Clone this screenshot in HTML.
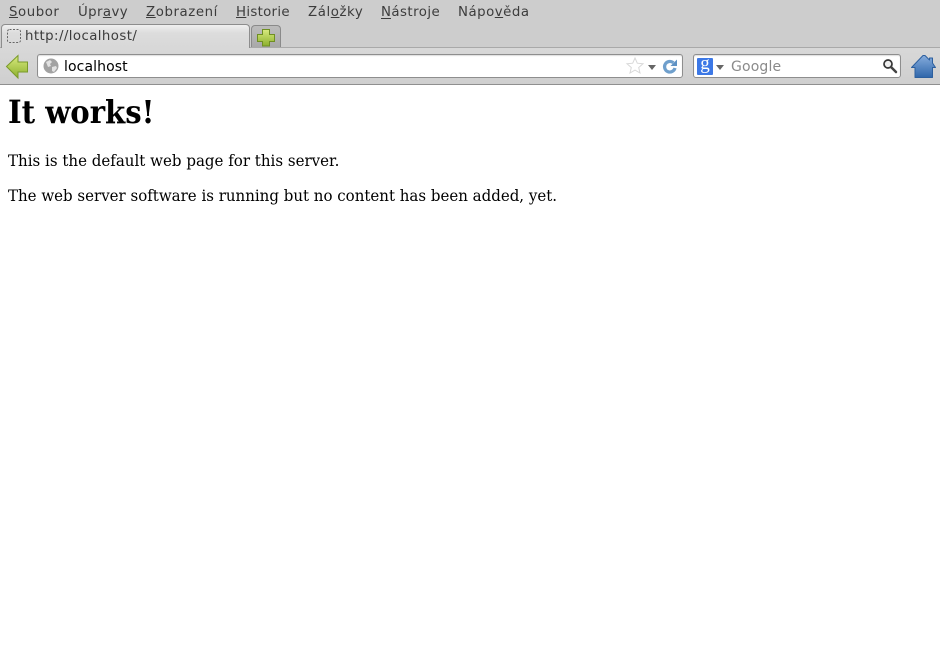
<!DOCTYPE html>
<html><head><meta charset="utf-8"><title>It works</title>
<style>
html,body{margin:0;padding:0;width:940px;height:658px;overflow:hidden;background:#fff}
#root{position:relative;width:940px;height:658px;overflow:hidden}
.a{position:absolute;white-space:nowrap}
.m{top:3.500px;font:13.33px/17px "DejaVu Sans",sans-serif;color:#3c3c3c;letter-spacing:.45px}
.m u{text-underline-offset:1px}
.s{font-family:"DejaVu Serif","Liberation Serif",serif;color:#000;left:8px;transform-origin:0 0}
svg{position:absolute;overflow:visible}
</style></head><body><div id="root">
<div class="a" style="left:0;top:0;width:940px;height:85px;background:#cdcdcd"></div>
<div class="a" style="left:0;top:47px;width:940px;height:37px;background:linear-gradient(#d8d8d8,#cfcfcf);border-top:1px solid #a9a9a9;box-sizing:border-box"></div>
<div class="a" style="left:0;top:84px;width:940px;height:1px;background:#8f8f8f"></div>

<div class="a m" style="left:9px;letter-spacing:.55px"><u>S</u>oubor</div>
<div class="a m" style="left:78px;letter-spacing:.4px">Úpr<u>a</u>vy</div>
<div class="a m" style="left:146px;letter-spacing:.58px"><u>Z</u>obrazení</div>
<div class="a m" style="left:236px;letter-spacing:.3px"><u>H</u>istorie</div>
<div class="a m" style="left:308px;letter-spacing:.58px">Zál<u>o</u>žky</div>
<div class="a m" style="left:381px">N<span style="display:none"></span>ástroje</div>
<div class="a m" style="left:458px;letter-spacing:.5px">Nápo<u>v</u>ěda</div>
<div class="a" style="left:381px;top:18px;width:10px;height:1px;background:#3c3c3c"></div>

<div class="a" style="left:1px;top:24px;width:249px;height:24px;box-sizing:border-box;border:1px solid #8d8d8d;border-bottom:0;border-radius:4px 4px 0 0;background:linear-gradient(#efefef,#dcdcdc 35%,#d8d8d8)"></div>
<svg style="left:7px;top:29px" width="14" height="14" viewBox="0 0 14 14"><rect x=".5" y=".5" width="13" height="13" rx="2" fill="none" stroke="#666" stroke-dasharray="2 1.500"/></svg>
<div class="a" style="left:25px;top:27.500px;font:13.33px/18px 'DejaVu Sans',sans-serif;color:#3c3c3c;letter-spacing:.42px">http://localhost/</div>

<div class="a" style="left:251px;top:25px;width:30px;height:22px;box-sizing:border-box;border:1px solid #8a8a8a;border-bottom:0;border-radius:4px 4px 0 0;background:linear-gradient(#bdbdbd,#a9a9a9)"></div>
<svg style="left:0;top:0" width="940" height="85" viewBox="0 0 940 85">
<defs>
<linearGradient id="g" x1="0" y1="0" x2="0" y2="1"><stop offset="0" stop-color="#d9ea80"/><stop offset="1" stop-color="#8cb02c"/></linearGradient>
<linearGradient id="b" x1="0" y1="0" x2="0" y2="1"><stop offset="0" stop-color="#86acdc"/><stop offset="1" stop-color="#2f66aa"/></linearGradient>
</defs>
<path d="M262.500 29.500h7v5h5v7h-5v4.500h-7v-4.500h-5v-7h5z" fill="url(#g)" stroke="#6f8f22"/>
<path d="M6.500 66.500L18 55.500v6.500h9.500v10H18v6z" fill="url(#g)" stroke="#7a9a2a"/>
<path d="M911.500 67.500L923 55.500h2l4.500 4.500v-2h3v5l3 4.500h-3v10h-17.500v-10z" fill="url(#b)" stroke="#2c5f9e" stroke-linejoin="round"/>
</svg>

<div class="a" style="left:37px;top:54px;width:646px;height:24px;box-sizing:border-box;border:1px solid #8e8e8e;border-radius:3px;background:#fff;box-shadow:inset 0 1px 1px #ddd"></div>
<svg style="left:43px;top:58px" width="16" height="16" viewBox="0 0 16 16"><circle cx="8" cy="8" r="7.500" fill="#a2a2a2"/><path d="M3 4l4-2 2 2-2 2 1 2-3 1zM9 9l4-1 1 2-3 4-2-1z" fill="#e2e2e2"/></svg>
<div class="a" style="left:64px;top:57.500px;font:14px/18px 'DejaVu Sans',sans-serif;color:#000;letter-spacing:.1px">localhost</div>
<svg style="left:626px;top:57px" width="18" height="18" viewBox="0 0 18 18"><path d="M9 1l2.300 5.200 5.700.6-4.300 3.700 1.300 5.500-5-2.900-5 2.900 1.300-5.500L1 6.800l5.700-.6z" fill="#fff" stroke="#d8d8d8"/></svg>
<svg style="left:647.500px;top:64.500px" width="9" height="6" viewBox="0 0 9 6"><path d="M0 0h8L4 5z" fill="#666"/></svg>
<svg style="left:662px;top:58px" width="16" height="16" viewBox="0 0 16 16"><path d="M13 10a5.300 5.300 0 1 1-1.600-5.200" fill="none" stroke="#6f9fcc" stroke-width="3.200"/><path d="M15 1.500v6.500H8.500z" fill="#5f92c4"/></svg>

<div class="a" style="left:693px;top:54px;width:208px;height:24px;box-sizing:border-box;border:1px solid #8e8e8e;border-radius:3px;background:#fff;box-shadow:inset 0 1px 1px #ddd"></div>
<div class="a" style="left:697px;top:58px;width:16px;height:17px;background:#3c78e6;border-radius:1px"></div>
<div class="a" style="left:697px;top:53px;width:16px;text-align:center;font:19px/22px 'Liberation Serif',serif;color:#fff">g</div>
<svg style="left:716px;top:64.500px" width="9" height="6" viewBox="0 0 9 6"><path d="M0 0h8L4 5z" fill="#666"/></svg>
<div class="a" style="left:731px;top:57.500px;font:14px/18px 'DejaVu Sans',sans-serif;color:#8a8a8a;letter-spacing:.15px">Google</div>
<svg style="left:882px;top:58px" width="16" height="16" viewBox="0 0 16 16"><circle cx="6" cy="6" r="4" fill="#eee" stroke="#333" stroke-width="1.700"/><path d="M9 9l5 5" stroke="#444" stroke-width="2.500" stroke-linecap="round"/></svg>

<div class="a" style="left:0;top:85px;width:940px;height:573px;background:#fff"></div>
<div class="a s" id="h" style="top:92px;font-weight:bold;font-size:32px;line-height:40px;transform:scaleX(.91)">It works!</div>
<div class="a s" style="top:151px;font-size:16px;line-height:20px;transform:scaleX(.94)">This is the default web page for this server.</div>
<div class="a s" style="top:186px;font-size:16px;line-height:20px;transform:scaleX(.938)">The web server software is running but no content has been added, yet.</div>
</div></body></html>
